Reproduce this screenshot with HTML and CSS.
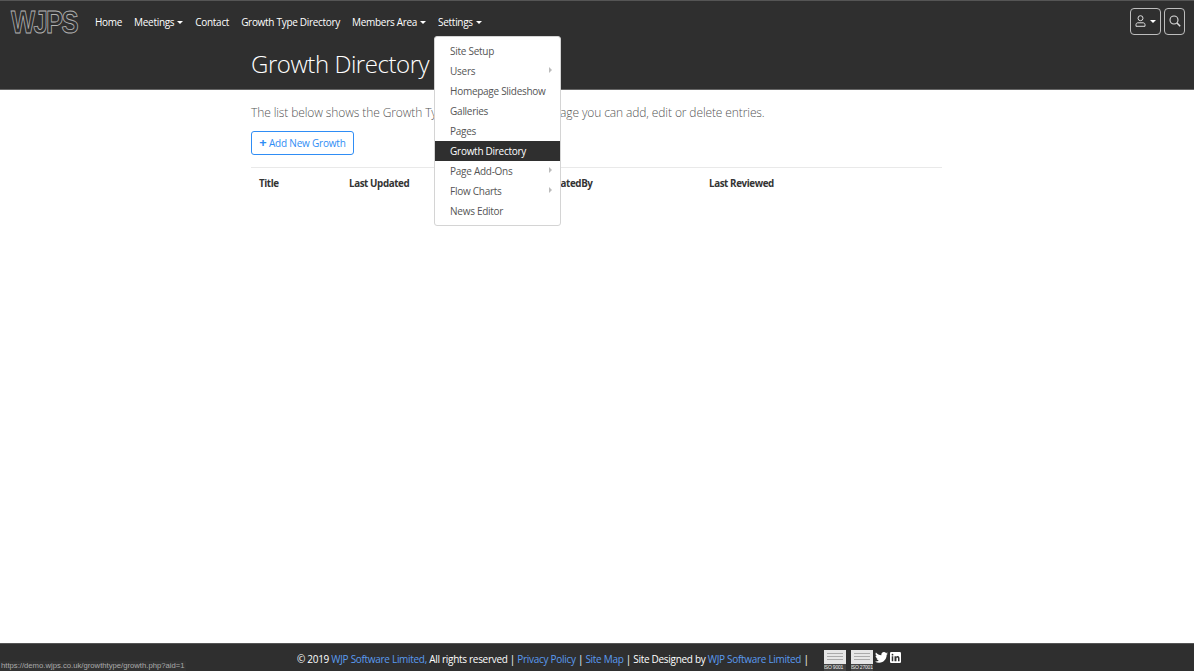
FILE: index.html
```html
<!DOCTYPE html>
<html lang="en">
<head>
<meta charset="utf-8">
<title>Growth Directory</title>
<link rel="stylesheet" href="styles.css">
</head>
<body>
<div class="page">
  <header class="masthead">
    <nav class="navbar">
      <a class="logo" href="#">
        <svg width="68" height="26" viewBox="0 0 68 26"><text class="logo-text" x="1" y="25" textLength="66" lengthAdjust="spacingAndGlyphs">WJPS</text></svg>
      </a>
      <ul class="nav-links">
        <li><a href="#">Home</a></li>
        <li><a href="#" class="caret">Meetings</a></li>
        <li><a href="#">Contact</a></li>
        <li><a href="#">Growth Type Directory</a></li>
        <li><a href="#" class="caret">Members Area</a></li>
        <li class="has-menu"><a href="#" class="caret">Settings</a>
          <ul class="menu">
            <li><a href="#">Site Setup</a></li>
            <li><a href="#" class="sub">Users</a></li>
            <li><a href="#">Homepage Slideshow</a></li>
            <li><a href="#">Galleries</a></li>
            <li><a href="#">Pages</a></li>
            <li><a href="#" class="active">Growth Directory</a></li>
            <li><a href="#" class="sub">Page Add-Ons</a></li>
            <li><a href="#" class="sub">Flow Charts</a></li>
            <li><a href="#">News Editor</a></li>
          </ul>
        </li>
      </ul>
      <div class="nav-tools">
        <button class="tool tool-user" aria-label="Account">
          <svg width="11" height="12" viewBox="0 0 11 12" fill="none" stroke="currentColor" stroke-width="1"><circle cx="5.5" cy="3.2" r="2.5"/><path d="M1 11.3V9.6C1 8.4 1.9 7.8 3 7.8H8C9.1 7.8 10 8.4 10 9.6V11.3Z"/></svg>
          <span class="tool-caret"></span>
        </button>
        <button class="tool tool-search" aria-label="Search">
          <svg width="12" height="12" viewBox="0 0 12 12" fill="none" stroke="currentColor" stroke-width="1.1"><circle cx="5" cy="5" r="4"/><path d="M8 8L11.2 11.2" stroke-width="1.5"/></svg>
        </button>
      </div>
    </nav>
    <h1 class="title">Growth Directory</h1>
  </header>

  <main class="content">
    <p class="lead">The list below shows the Growth Types in the list. On this page you can add, edit or delete entries.</p>
    <a href="#" class="btn-add"><span class="plus">+</span> Add New Growth</a>
    <div class="table-head">
      <span>Title</span>
      <span>Last Updated</span>
      <span>UpdatedBy</span>
      <span>Last Reviewed</span>
    </div>
  </main>

  <footer class="footer">
    <p class="footer-text">© 2019 <a href="#">WJP Software Limited,</a> All rights reserved | <a href="#">Privacy Policy</a> | <a href="#">Site Map</a> | Site Designed by <a href="#">WJP Software Limited</a> |</p>
    <div class="badges">
      <div class="badge"><span class="badge-top"></span><span class="badge-label">ISO 9001</span></div>
      <div class="badge"><span class="badge-top"></span><span class="badge-label">ISO 27001</span></div>
      <svg class="social" width="13" height="11" viewBox="0 0 24 20" fill="#fff"><path d="M24 2.4c-.9.4-1.8.7-2.8.8 1-.6 1.8-1.6 2.2-2.7-1 .6-2 1-3.100 1.200C19.400.7 18.100 0 16.600 0c-3.200 0-5.500 3-4.800 6C7.700 5.800 4.100 3.900 1.700.9.400 3.100 1 6 3.200 7.400c-.8 0-1.600-.2-2.200-.6 0 2.300 1.600 4.500 4 5-.7.2-1.500.2-2.200.1.600 2 2.500 3.400 4.600 3.400C5.300 17 2.700 17.800 0 17.500 2.200 18.900 4.800 19.700 7.500 19.700c9.100 0 14.300-7.700 14-14.600 1-.7 1.800-1.600 2.500-2.700z"/></svg>
      <svg class="social" width="11" height="11" viewBox="0 0 22 22"><rect width="22" height="22" rx="2.500" fill="#fff"/><path fill="#2f2f2f" d="M3.500 8.500h3v10h-3zM5 3.500a1.700 1.700 0 1 1 0 3.500 1.700 1.700 0 0 1 0-3.500zM9 8.500h2.900v1.400c.5-.9 1.600-1.700 3.200-1.700 3.200 0 3.900 2 3.900 4.800v5.500h-3v-4.900c0-1.200 0-2.700-1.600-2.700s-1.500 1.300-1.500 2.600v5H9z"/></svg>
    </div>
  </footer>

  <div class="status-url">https://demo.wjps.co.uk/growthtype/growth.php?aid=1</div>
</div>
</body>
</html>
```

FILE: styles.css
```css
* { box-sizing: border-box; }
html, body { margin: 0; padding: 0; height: 100%; }
body {
  font-family: "Open Sans", "Noto Sans", "Liberation Sans", sans-serif;
  font-size: 10px;
  color: #212529;
  background: #fff;
}
a { text-decoration: none; color: inherit; }
ul { list-style: none; margin: 0; padding: 0; }

.page {
  position: relative;
  height: 671px;
  display: flex;
  flex-direction: column;
  overflow: hidden;
}

/* Header */
.masthead {
  height: 90px;
  background: #2f2f2f;
  border-top: 1px solid #555;
  border-bottom: 1px solid #666;
  flex: none;
}
.navbar {
  display: flex;
  align-items: center;
  height: 42px;
  padding: 0 9px 0 10px;
}
.logo {
  display: block;
  height: 26px;
  width: 68px;
  margin-right: 17px;
  margin-top: -3px;
}
.logo svg { display: block; overflow: visible; }
.logo-text {
  font-family: "Liberation Sans", sans-serif;
  font-size: 31px;
  font-weight: 700;
  letter-spacing: -2px;
  fill: none;
  stroke: #b4b4b4;
  stroke-width: 0.9px;
}
.nav-links {
  display: flex;
  gap: 12px;
  color: #fff;
  letter-spacing: -0.3px;
}
.nav-links > li { position: relative; white-space: nowrap; }
.caret::after {
  content: "";
  display: inline-block;
  margin-left: 3px;
  vertical-align: 2px;
  border-top: 3px solid currentColor;
  border-left: 3px solid transparent;
  border-right: 3px solid transparent;
}
.menu {
  position: absolute;
  top: 21px;
  left: -4px;
  width: 127px;
  padding: 4px 0;
  background: #fff;
  border: 1px solid #d4d4d4;
  border-radius: 3px;
  color: #555;
  letter-spacing: -0.28px;
  z-index: 5;
}
.menu a {
  display: block;
  height: 20px;
  line-height: 20px;
  padding-left: 15px;
  position: relative;
}
.menu a.active { background: #2f2f2f; color: #fff; }
.menu a.sub::after {
  content: "";
  position: absolute;
  right: 8px;
  top: 6px;
  border-left: 3px solid #bbb;
  border-top: 3px solid transparent;
  border-bottom: 3px solid transparent;
}
.nav-tools { margin-left: auto; margin-bottom: 2px; display: flex; gap: 3px; }
.tool {
  display: flex;
  align-items: center;
  justify-content: center;
  height: 27px;
  background: transparent;
  border: 1px solid #bdbdbd;
  border-radius: 4px;
  color: #ddd;
  padding: 0;
}
.tool-user { width: 31px; gap: 4px; }
.tool-search { width: 21px; }
.tool-caret {
  border-top: 3px solid #fff;
  border-left: 3px solid transparent;
  border-right: 3px solid transparent;
}
.title {
  margin: -1px 0 0 251px;
  font-size: 24px;
  font-weight: 300;
  line-height: 44px;
  color: #fff;
  letter-spacing: -0.45px;
}

/* Content */
.content {
  flex: 1;
  width: 691px;
  margin-left: 251px;
}
.lead {
  margin: 14px 0 0;
  height: 18px;
  font-size: 12px;
  font-weight: 300;
  line-height: 18px;
  color: #555;
  letter-spacing: -0.11px;
  white-space: nowrap;
}
.btn-add {
  display: inline-block;
  margin-top: 9px;
  width: 103px;
  height: 24px;
  line-height: 22px;
  text-align: center;
  border: 1px solid #2f8df5;
  border-radius: 3px;
  color: #2f8df5;
  letter-spacing: -0.2px;
  white-space: nowrap;
}
.plus { font-weight: 700; font-size: 13px; line-height: 10px; }
.table-head {
  display: grid;
  grid-template-columns: 90px 193px 167px 1fr;
  margin-top: 12px;
  padding: 9px 8px 0;
  border-top: 1px solid #e9e9e9;
  font-size: 9.8px;
  font-weight: 700;
  color: #333;
  letter-spacing: -0.4px;
}

/* Footer */
.footer {
  flex: none;
  height: 28px;
  background: #2f2f2f;
  border-top: 1px solid #555;
  display: flex;
  align-items: center;
  padding-left: 297px;
  color: #fff;
}
.footer-text {
  margin: 2px 0 0;
  letter-spacing: -0.3px;
  white-space: nowrap;
}
.footer-text a { color: #5a9bf0; }
.badges {
  display: flex;
  align-items: center;
  margin-left: 15px;
  margin-top: 6px;
  gap: 5px;
}
.badge {
  width: 22px;
  height: 21px;
  background: #e6e6e6;
  display: flex;
  flex-direction: column;
  overflow: hidden;
}
.badge-top {
  flex: 1;
  margin: 3px 3px 2px;
  background: repeating-linear-gradient(#aaa 0 1px, #e6e6e6 1px 3px);
}
.badge-label {
  height: 7px;
  background: #444;
  color: #eee;
  font-family: "Liberation Sans", sans-serif;
  font-size: 5px;
  line-height: 7px;
  letter-spacing: -0.2px;
  white-space: nowrap;
}
.social { margin-left: -3px; margin-top: -6px; }
.social + .social { margin-left: -3px; }

.status-url {
  position: absolute;
  left: 0;
  bottom: 0;
  height: 10px;
  padding: 0 1px;
  font-family: "Liberation Sans", sans-serif;
  font-size: 7.7px;
  line-height: 10px;
  color: #aaa;
  background: #333;
  white-space: nowrap;
}
```
